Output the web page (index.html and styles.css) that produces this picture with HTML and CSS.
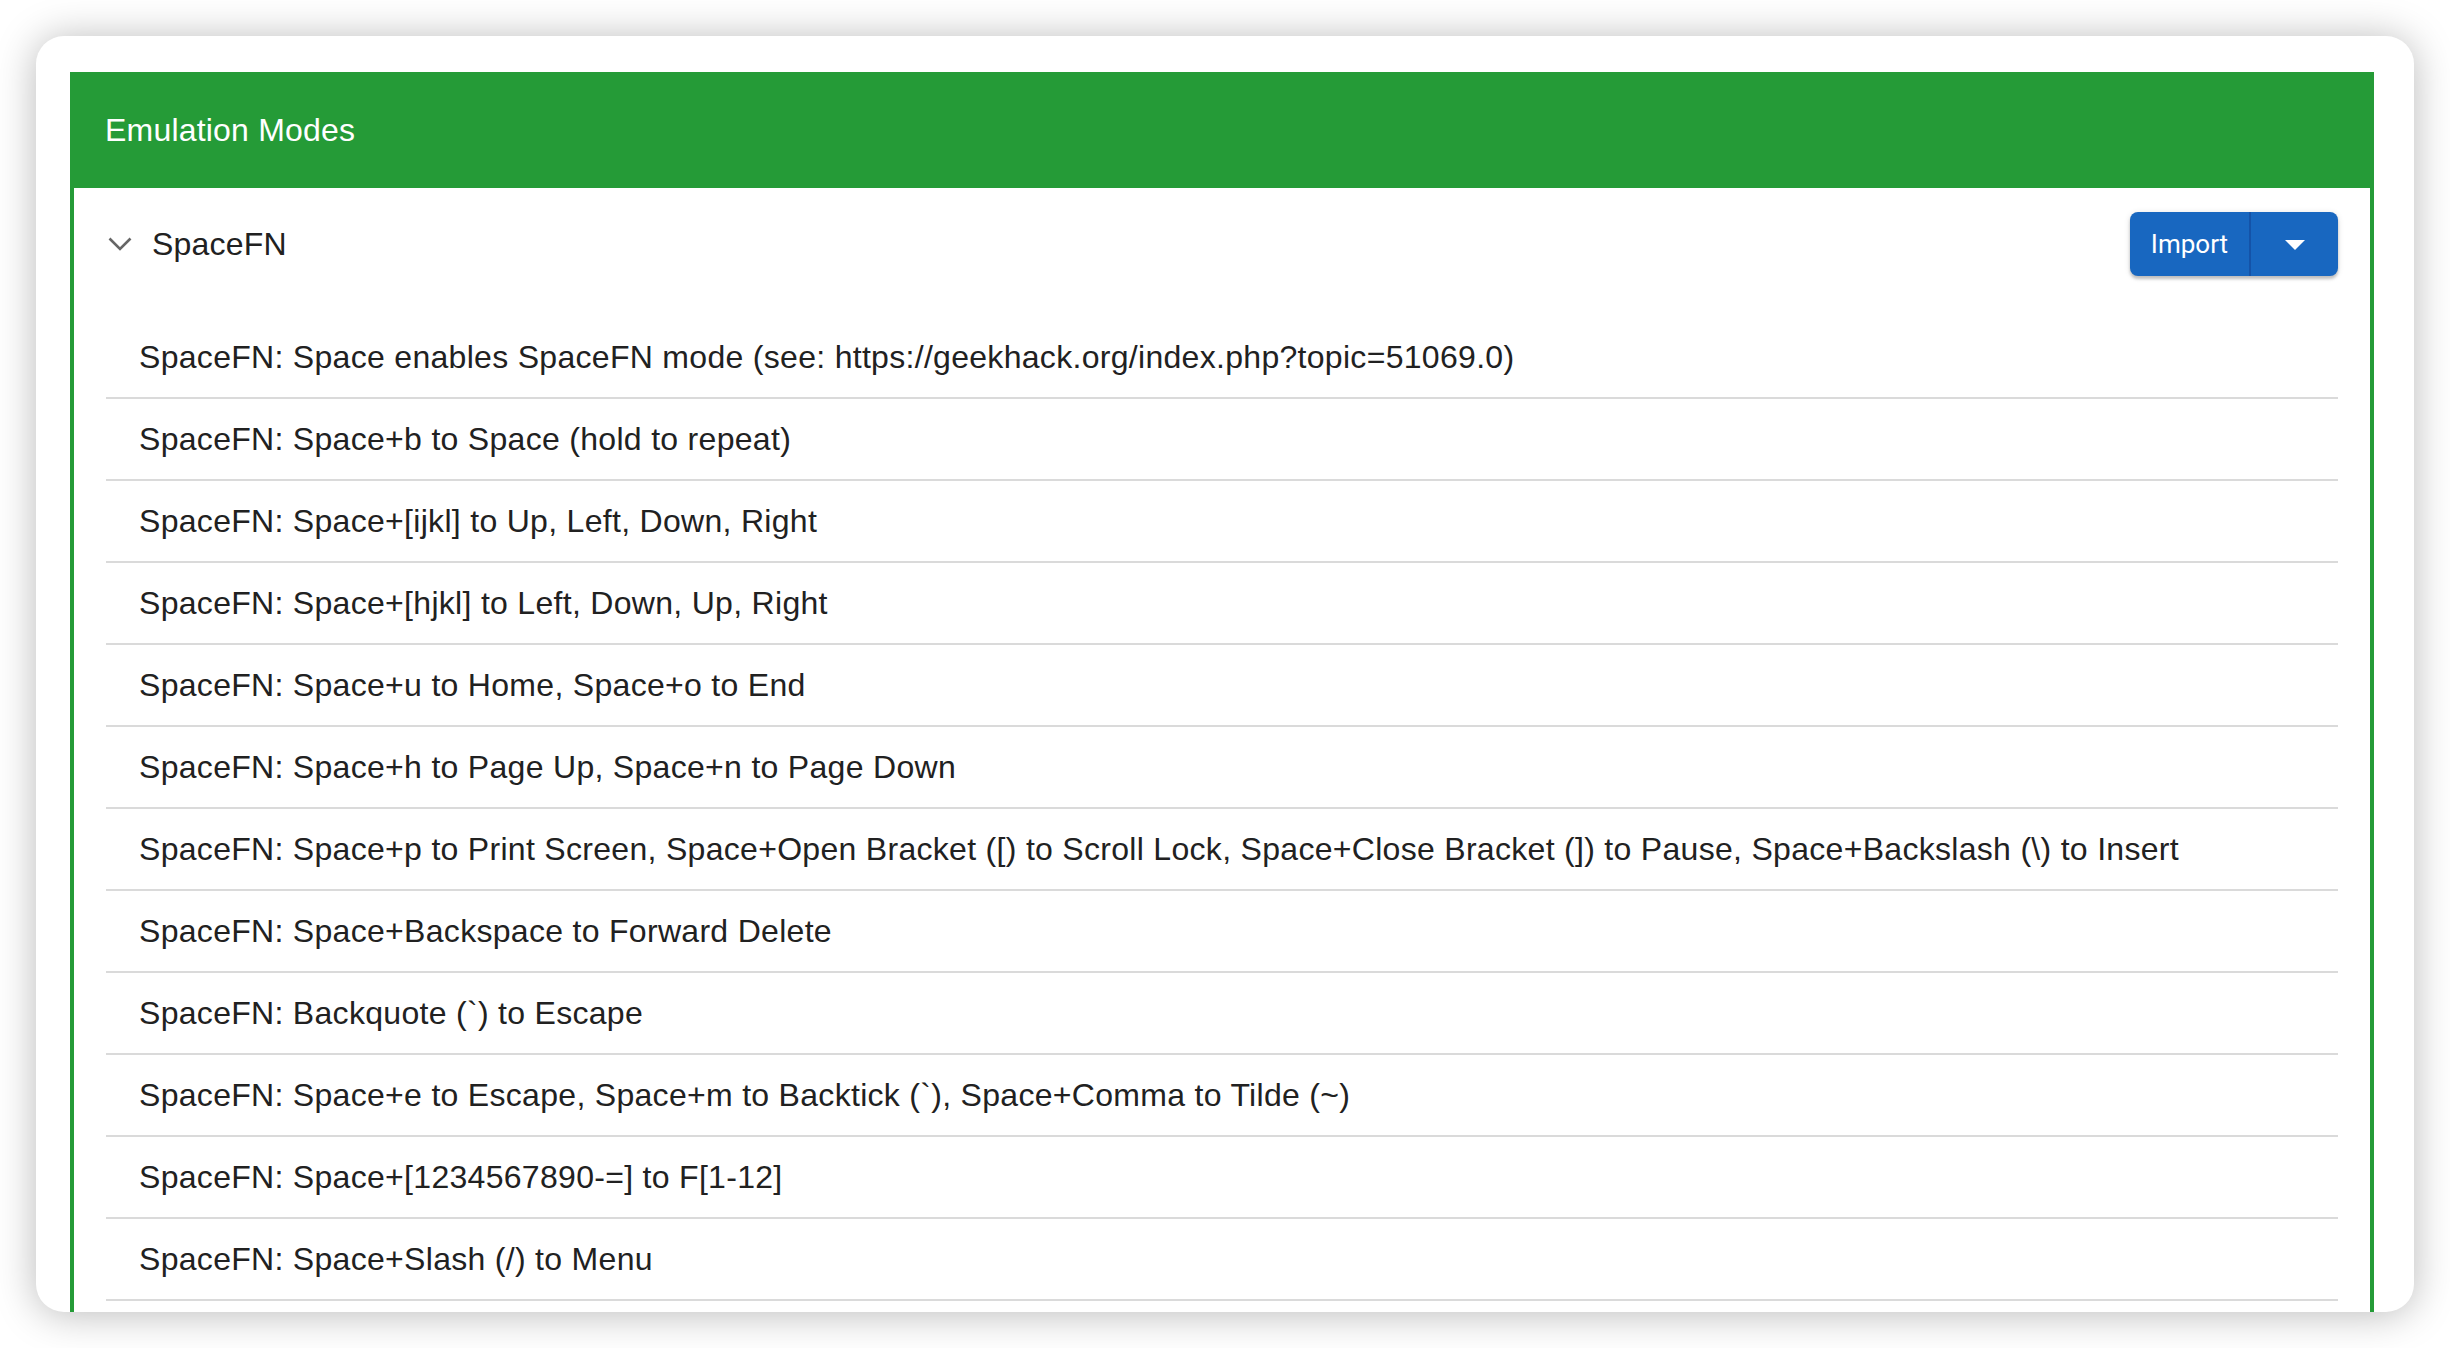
FILE: index.html
```html
<!DOCTYPE html>
<html lang="en">
<head>
<meta charset="utf-8">
<title>Emulation Modes</title>
<link rel="stylesheet" href="styles.css">
</head>
<body>
<div class="card">
  <section class="panel">
    <header class="panel-header">Emulation Modes</header>
    <div class="panel-body">
      <div class="group-head">
        <div class="group-title">
          <svg class="chevron" width="24" height="14" viewBox="0 0 24 14"><polyline points="1.5,1.5 12,12 22.5,1.5" fill="none" stroke="#666" stroke-width="2.6"/></svg>
          <span>SpaceFN</span>
        </div>
        <div class="split-btn">
          <span class="btn-main">Import</span>
          <span class="btn-arrow"><svg width="20" height="10" viewBox="0 0 20 10"><polygon points="0,0 20,0 10,10" fill="#fff"/></svg></span>
        </div>
      </div>
      <ul class="rules">
        <li>SpaceFN: Space enables SpaceFN mode (see: https://geekhack.org/index.php?topic=51069.0)</li>
        <li>SpaceFN: Space+b to Space (hold to repeat)</li>
        <li>SpaceFN: Space+[ijkl] to Up, Left, Down, Right</li>
        <li>SpaceFN: Space+[hjkl] to Left, Down, Up, Right</li>
        <li>SpaceFN: Space+u to Home, Space+o to End</li>
        <li>SpaceFN: Space+h to Page Up, Space+n to Page Down</li>
        <li>SpaceFN: Space+p to Print Screen, Space+Open Bracket ([) to Scroll Lock, Space+Close Bracket (]) to Pause, Space+Backslash (\) to Insert</li>
        <li>SpaceFN: Space+Backspace to Forward Delete</li>
        <li>SpaceFN: Backquote (`) to Escape</li>
        <li>SpaceFN: Space+e to Escape, Space+m to Backtick (`), Space+Comma to Tilde (~)</li>
        <li>SpaceFN: Space+[1234567890-=] to F[1-12]</li>
        <li>SpaceFN: Space+Slash (/) to Menu</li>
      </ul>
    </div>
  </section>
</div>
</body>
</html>
```
FILE: styles.css
```css
html, body {
  margin: 0;
  padding: 0;
  background: #ffffff;
}
body {
  width: 2450px;
  height: 1348px;
  overflow: hidden;
  padding: 36px 36px 0 36px;
  box-sizing: border-box;
  font-family: "Liberation Sans", Arial, sans-serif;
}
.card {
  width: 2378px;
  height: 1276px;
  box-sizing: border-box;
  background: #fff;
  border-radius: 28px;
  box-shadow: 0 2px 40px rgba(0, 0, 0, 0.28);
  overflow: hidden;
  padding: 36px 40px 0 34px;
}
.panel {
  border: 4px solid #259b37;
  border-top: 0;
  border-bottom: 0;
  height: 100%;
  box-sizing: border-box;
}
.panel-header {
  background: #259b37;
  height: 116px;
  margin: 0 -4px;
  padding-left: 35px;
  display: flex;
  align-items: center;
  color: #fff;
  font-size: 32px;
  letter-spacing: 0.2px;
}
.panel-body {
  padding: 0 32px;
}
.group-head {
  height: 112px;
  display: flex;
  align-items: center;
  justify-content: space-between;
}
.group-title {
  display: flex;
  align-items: center;
  gap: 20px;
  font-size: 32px;
  color: #212121;
  letter-spacing: 0.2px;
}
.chevron {
  margin-left: 2px;
  display: block;
}
.split-btn {
  display: flex;
  height: 64px;
  border-radius: 8px;
  background: #1867c0;
  box-shadow: 0 3px 3px rgba(0, 0, 0, 0.2), 0 1px 6px rgba(0, 0, 0, 0.12);
  color: #fff;
  font-family: Roboto, "Liberation Sans", sans-serif;
  font-size: 26px;
}
.btn-main {
  width: 119px;
  display: flex;
  align-items: center;
  justify-content: center;
  border-right: 2px solid #1453a8;
}
.btn-arrow {
  width: 87px;
  display: flex;
  align-items: center;
  justify-content: center;
}
.btn-arrow svg {
  display: block;
  margin-top: 2px;
}
.rules {
  list-style: none;
  margin: 0;
  padding: 17px 0 0 0;
}
.rules li {
  height: 80px;
  border-bottom: 2px solid #dadada;
  display: flex;
  align-items: center;
  padding-left: 33px;
  font-size: 32px;
  letter-spacing: 0.3px;
  color: #212121;
  white-space: nowrap;
}
```
